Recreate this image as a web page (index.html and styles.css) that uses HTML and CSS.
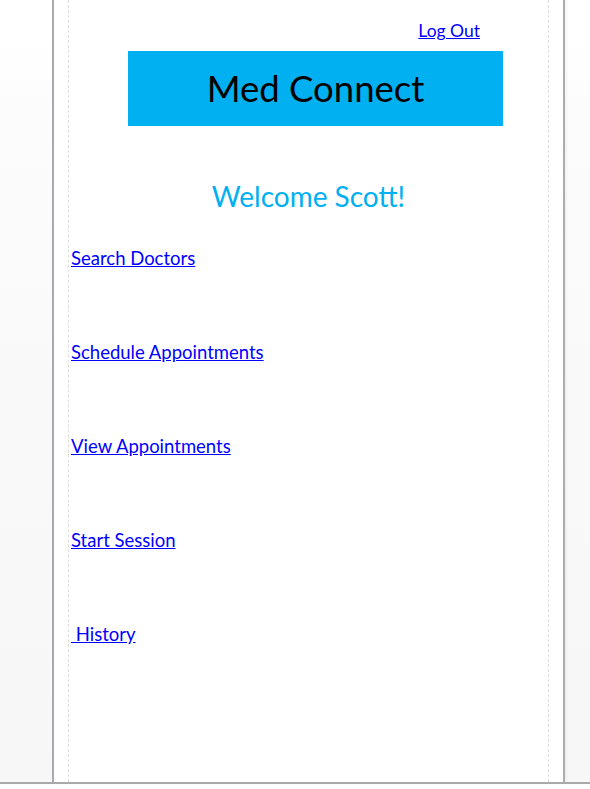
FILE: index.html
```html
<!DOCTYPE html>
<html>
<head>
<meta charset="utf-8">
<link rel="stylesheet" href="styles.css">
</head>
<body>
<div class="workspace">
  <div class="page">
    <div class="content">
      <div class="logout-row"><a href="#" class="logout">Log Out</a></div>
      <div class="banner">Med Connect</div>
      <h1 class="welcome">Welcome Scott!</h1>
      <ul class="links">
        <li><a href="#">Search Doctors</a></li>
        <li><a href="#">Schedule Appointments</a></li>
        <li><a href="#">View Appointments</a></li>
        <li><a href="#">Start Session</a></li>
        <li><a href="#">&nbsp;History</a></li>
      </ul>
    </div>
  </div>
</div>
<div class="statusbar"></div>
</body>
</html>
```
FILE: styles.css
```css
html, body {
  margin: 0;
  padding: 0;
}
body {
  width: 590px;
  height: 789px;
  overflow: hidden;
  background: #ffffff;
  font-family: Lato, "Open Sans", sans-serif;
}
.workspace {
  height: 782px;
  overflow: hidden;
  background: linear-gradient(#ffffff 0px, #ffffff 32px, #fcfcfc 120px, #f9f9f9 400px, #f7f7f7 100%);
}
.page {
  margin-left: 52px;
  width: 513px;
  height: 782px;
  box-sizing: border-box;
  background: #ffffff;
  border-left: 2px solid #a8a8b0;
  border-right: 2px solid #acacb0;
  padding-left: 14px;
  box-shadow: 2px 0 2px rgba(0, 0, 0, 0.04);
}
.content {
  width: 481px;
  height: 100%;
  border-left: 1px dashed #dedede;
  border-right: 1px dashed #dedede;
  box-sizing: border-box;
}
.statusbar {
  height: 7px;
  border-top: 2px solid #a9a9a9;
  background: #ffffff;
  box-sizing: border-box;
}
a {
  color: #0000ff;
  text-decoration: underline;
}
.logout-row {
  display: flex;
  justify-content: flex-end;
  padding-right: 68px;
  padding-top: 21px;
  height: 51px;
  box-sizing: border-box;
  font-size: 17.5px;
  line-height: 20px;
}
.banner {
  margin-left: 59px;
  width: 375px;
  height: 75px;
  background: #00b0f0;
  color: #000000;
  font-size: 36.5px;
  line-height: 75px;
  text-align: center;
}
.welcome {
  margin: 53px 0 0 0;
  color: #00b0f0;
  font-weight: normal;
  font-size: 28px;
  line-height: 34px;
  text-align: center;
}
.links {
  list-style: none;
  margin: 33px 0 0 2px;
  padding: 0;
  display: flex;
  flex-direction: column;
  gap: 70px;
  font-size: 18.5px;
  line-height: 24px;
}
```
